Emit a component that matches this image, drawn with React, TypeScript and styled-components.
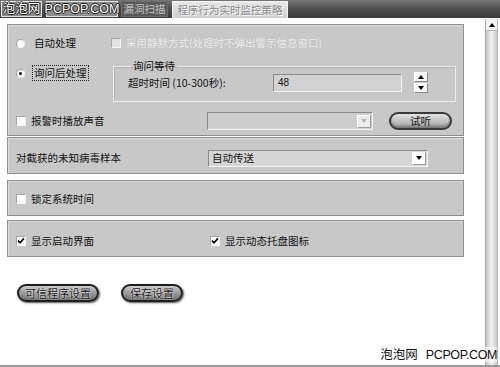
import React from "react";
import styled, { createGlobalStyle, css } from "styled-components";

const Global = createGlobalStyle`
  html, body { margin: 0; padding: 0; background: #fff; }
  body { font-family: "Noto Sans CJK SC", "Liberation Sans", sans-serif; }
  * { box-sizing: border-box; }
`;

const FONT = `"Noto Sans CJK SC", "Liberation Sans", sans-serif`;

const Root = styled.div`
  position: relative;
  width: 500px;
  height: 367px;
  overflow: hidden;
  background: #fff;
  display: flex;
  flex-direction: column;
  border-bottom: 2px solid #9a9a9a;
  font-family: ${FONT};
  font-size: 10.5px;
  color: #111;
`;

const TopBar = styled.div`
  height: 18px;
  flex: none;
  display: flex;
  align-items: stretch;
  padding: 1px 0 1px 1px;
  background: linear-gradient(#767676 0%, #505050 45%, #3a3a3a 100%);
`;

type TabKind = "mark" | "normal" | "active";

const Tab = styled.div<{ $kind: TabKind; $w: number; $ml: number }>`
  width: ${(p) => p.$w}px;
  margin-left: ${(p) => p.$ml}px;
  display: flex;
  align-items: center;
  justify-content: center;
  white-space: nowrap;
  line-height: 14px;
  ${(p) =>
    p.$kind === "mark" &&
    css`
      background: #8c8c8c;
      border: 1px solid #e2e2e2;
      color: #fff;
      font-size: 12.5px;
      font-family: "Liberation Sans", "Noto Sans CJK SC", sans-serif;
      text-shadow: -1px 0 #222, 1px 0 #222, 0 -1px #222, 0 1px #222;
    `}
  ${(p) =>
    p.$kind === "normal" &&
    css`
      background: #5a5a5a;
      border: 1px solid #6c6c6c;
      color: #c4c4c4;
      font-size: 10.5px;
    `}
  ${(p) =>
    p.$kind === "active" &&
    css`
      background: linear-gradient(#e8e8e8, #cfcfcf);
      border: 1px solid #f4f4f4;
      border-bottom: none;
      margin-bottom: -1px;
      color: #8a8a8a;
      font-size: 10.5px;
      text-shadow: 1px 1px 0 #fafafa;
    `}
`;

const Main = styled.div`
  flex: 1;
  display: flex;
  min-height: 0;
`;

const Content = styled.div`
  flex: 1;
  padding: 6px 21px 0 7px;
  display: flex;
  flex-direction: column;
`;

const Scrollbar = styled.div`
  width: 13px;
  margin: 1px 2px 0 0;
  flex: none;
  display: flex;
  flex-direction: column;
  border-left: 1px solid #a8a8a8;
  border-right: 1px solid #b8b8b8;
  background: linear-gradient(90deg, #c4c4c4, #f2f2f2 50%, #c8c8c8);
`;

const ScrollArrow = styled.div`
  height: 12px;
  display: flex;
  align-items: center;
  justify-content: center;
  background: #f4f4f4;
  border-bottom: 1px solid #b0b0b0;
`;

const Panel = styled.div<{ $h: number; $mt: number }>`
  height: ${(p) => p.$h}px;
  margin-top: ${(p) => p.$mt}px;
  flex: none;
  background: #c8c8c8;
  border: 1px solid #8e8e8e;
  box-shadow: inset 1px 1px 0 #dcdcdc;
`;

const Panel1Body = styled.div`
  padding: 10px 0 0 8px;
  display: flex;
  flex-direction: column;
`;

const Row = styled.div<{ $cols: string; $mt?: number; $h?: number }>`
  display: grid;
  grid-template-columns: ${(p) => p.$cols};
  align-items: center;
  margin-top: ${(p) => p.$mt ?? 0}px;
  ${(p) => (p.$h ? `height: ${p.$h}px;` : "")}
`;

const TopRow = styled(Row)`
  align-items: start;
`;

const Option = styled.label<{ $disabled?: boolean; $lift?: number }>`
  display: flex;
  align-items: center;
  gap: 5px;
  white-space: nowrap;
  line-height: 14px;
  margin-top: ${(p) => p.$lift ?? 0}px;
  color: ${(p) => (p.$disabled ? "#ececec" : "#111")};
  ${(p) => (p.$disabled ? "text-shadow: 0 0 1px #bcbcbc;" : "")}
`;

const OptionText = styled.span<{ $focus?: boolean }>`
  padding: 0 1px;
  border: 1px dotted ${(p) => (p.$focus ? "#222" : "transparent")};
`;

const Radio = styled.span<{ $checked?: boolean }>`
  width: 9px;
  height: 9px;
  flex: none;
  border-radius: 50%;
  background: #fff;
  border: 1px solid;
  border-color: #a0a0a0 #f4f4f4 #f4f4f4 #a0a0a0;
  display: flex;
  align-items: center;
  justify-content: center;
  margin-right: 2px;
  &::after {
    content: "";
    width: 3px;
    height: 3px;
    border-radius: 50%;
    background: ${(p) => (p.$checked ? "#000" : "transparent")};
  }
`;

const Box = styled.span<{ $disabled?: boolean }>`
  width: 10px;
  height: 10px;
  flex: none;
  background: ${(p) => (p.$disabled ? "#e2e2e2" : "#fff")};
  border: 1px solid;
  border-color: #a4a4a4 #f6f6f6 #f6f6f6 #a4a4a4;
  display: flex;
  align-items: center;
  justify-content: center;
`;

const Check = ({ checked, disabled }: { checked?: boolean; disabled?: boolean }) => (
  <Box $disabled={disabled}>
    {checked && (
      <svg width="8" height="8" viewBox="0 0 8 8">
        <path d="M1 3.6 L3 5.8 L7 1.4" stroke="#000" strokeWidth="1.6" fill="none" />
      </svg>
    )}
  </Box>
);

const Group = styled.fieldset`
  margin: 0 0 0 1px;
  width: 343px;
  padding: 0 0 8px 14px;
  border: 1px solid #ececec;
  box-shadow: inset 1px 1px 0 #b4b4b4;
`;

const Legend = styled.legend`
  padding: 0 2px;
  margin-left: 3px;
  line-height: 12px;
`;

const GroupRow = styled.div`
  display: grid;
  grid-template-columns: 133px 129px 14px;
  column-gap: 12px;
  align-items: center;
  height: 21px;
`;

const Field = styled.div`
  height: 18px;
  background: #d2d2d2;
  border: 1px solid;
  border-color: #8a8a8a #f4f4f4 #f4f4f4 #8a8a8a;
  padding: 0 4px;
  display: flex;
  align-items: center;
  font-family: "Liberation Sans", sans-serif;
  font-size: 10px;
`;

const Spin = styled.div`
  display: flex;
  flex-direction: column;
  gap: 1px;
`;

const SpinBtn = styled.div`
  height: 10px;
  background: #f4f4f4;
  border: 1px solid;
  border-color: #fff #8a8a8a #8a8a8a #fff;
  display: flex;
  align-items: center;
  justify-content: center;
`;

const Tri = ({ up, color = "#000" }: { up?: boolean; color?: string }) => (
  <svg width="6" height="4" viewBox="0 0 6 4">
    <path d={up ? "M0 4 L3 0 L6 4 Z" : "M0 0 L6 0 L3 4 Z"} fill={color} />
  </svg>
);

const Select = styled.div<{ $disabled?: boolean }>`
  height: ${(p) => (p.$disabled ? 18 : 17)}px;
  background: ${(p) => (p.$disabled ? "#cdcdcd" : "#d6d6d6")};
  border: 1px solid;
  border-color: #8a8a8a #f4f4f4 #f4f4f4 #8a8a8a;
  display: flex;
  align-items: center;
  justify-content: space-between;
  padding-left: 3px;
  padding-right: 1px;
  line-height: 14px;
`;

const SelectBtn = styled.div<{ $disabled?: boolean }>`
  width: 14px;
  height: 13px;
  background: ${(p) => (p.$disabled ? "#ececec" : "#fff")};
  border: 1px solid;
  border-color: #fff #9a9a9a #9a9a9a #fff;
  display: flex;
  align-items: center;
  justify-content: center;
`;

const PillButton = styled.button<{ $dark?: boolean; $w: number }>`
  width: ${(p) => p.$w}px;
  height: 18px;
  padding: 0;
  border-radius: 9px;
  font-family: ${FONT};
  font-size: ${(p) => (p.$dark ? 11 : 10.5)}px;
  line-height: 14px;
  color: #111;
  display: flex;
  align-items: center;
  justify-content: center;
  ${(p) =>
    p.$dark
      ? css`
          border: 2px solid #1e1e1e;
          background: linear-gradient(#c8c8c8 0%, #9a9a9a 50%, #6e6e6e 100%);
          box-shadow: 1px 1px 2px #555;
          text-shadow: 0 0 2px #f4f4f4, 0 0 1px #fff;
        `
      : css`
          border: 2px solid #3a3a3a;
          background: linear-gradient(#e2e2e2 0%, #bdbdbd 60%, #9c9c9c 100%);
          box-shadow: inset 0 -2px 2px #7a7a7a;
        `}
`;

const SimpleRow = styled.div<{ $pt: number }>`
  height: 100%;
  padding: ${(p) => p.$pt}px 0 0 8px;
  display: flex;
  align-items: center;
`;

const Grid2 = styled.div<{ $cols: string }>`
  width: 100%;
  display: grid;
  grid-template-columns: ${(p) => p.$cols};
  align-items: center;
`;

const Plain = styled.span`
  white-space: nowrap;
  line-height: 14px;
`;

const ButtonRow = styled.div`
  margin-top: 27px;
  padding-left: 10px;
  display: flex;
  gap: 22px;
`;

const Watermark = styled.div`
  position: absolute;
  right: 3px;
  bottom: 3px;
  font-size: 12.5px;
  line-height: 14px;
  color: #111;
  white-space: nowrap;
  background: rgba(255, 255, 255, 0.6);
`;

const WmLatin = styled.span`
  font-family: "Liberation Sans", sans-serif;
  margin-left: 8px;
  letter-spacing: -0.4px;
`;

export default function App() {
  return (
    <Root>
      <Global />
      <TopBar>
        <Tab $kind="mark" $w={41} $ml={0}>泡泡网</Tab>
        <Tab $kind="mark" $w={72} $ml={4}>PCPOP.COM</Tab>
        <Tab $kind="normal" $w={47} $ml={3}>漏洞扫描</Tab>
        <Tab $kind="active" $w={116} $ml={4}>程序行为实时监控策略</Tab>
      </TopBar>
      <Main>
        <Content>
          <Panel $h={112} $mt={0}>
            <Panel1Body>
              <Row $cols="95px 1fr" $h={16}>
                <Option>
                  <Radio />
                  <OptionText>自动处理</OptionText>
                </Option>
                <Option $disabled>
                  <Check disabled />
                  <span>采用静默方式(处理时不弹出警示信息窗口)</span>
                </Option>
              </Row>
              <TopRow $cols="96px 1fr" $mt={9}>
                <Option $lift={5}>
                  <Radio $checked />
                  <OptionText $focus>询问后处理</OptionText>
                </Option>
                <Group>
                  <Legend>询问等待</Legend>
                  <GroupRow>
                    <Plain>超时时间 (10-300秒):</Plain>
                    <Field>48</Field>
                    <Spin>
                      <SpinBtn>
                        <Tri up />
                      </SpinBtn>
                      <SpinBtn>
                        <Tri />
                      </SpinBtn>
                    </Spin>
                  </GroupRow>
                </Group>
              </TopRow>
              <Row $cols="191px 166px 16px 63px" $mt={10} $h={18}>
                <Option>
                  <Check />
                  <span>报警时播放声音</span>
                </Option>
                <Select $disabled>
                  <span />
                  <SelectBtn $disabled>
                    <Tri color="#b4b4b4" />
                  </SelectBtn>
                </Select>
                <span />
                <PillButton $w={63}>试听</PillButton>
              </Row>
            </Panel1Body>
          </Panel>
          <Panel $h={37} $mt={1}>
            <SimpleRow $pt={5}>
              <Grid2 $cols="192px 220px">
                <Plain>对截获的未知病毒样本</Plain>
                <Select>
                  <span>自动传送</span>
                  <SelectBtn>
                    <Tri />
                  </SelectBtn>
                </Select>
              </Grid2>
            </SimpleRow>
          </Panel>
          <Panel $h={36} $mt={6}>
            <SimpleRow $pt={1}>
              <Option>
                <Check />
                <span>锁定系统时间</span>
              </Option>
            </SimpleRow>
          </Panel>
          <Panel $h={37} $mt={4}>
            <SimpleRow $pt={4}>
              <Grid2 $cols="194px 1fr">
                <Option>
                  <Check checked />
                  <span>显示启动界面</span>
                </Option>
                <Option>
                  <Check checked />
                  <span>显示动态托盘图标</span>
                </Option>
              </Grid2>
            </SimpleRow>
          </Panel>
          <ButtonRow>
            <PillButton $dark $w={82}>可信程序设置</PillButton>
            <PillButton $dark $w={62}>保存设置</PillButton>
          </ButtonRow>
        </Content>
        <Scrollbar>
          <ScrollArrow>
            <Tri up />
          </ScrollArrow>
        </Scrollbar>
      </Main>
      <Watermark>
        泡泡网<WmLatin>PCPOP.COM</WmLatin>
      </Watermark>
    </Root>
  );
}
